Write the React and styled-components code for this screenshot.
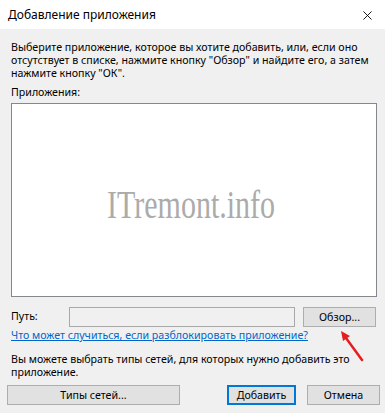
import React from 'react';
import styled, { createGlobalStyle } from 'styled-components';

// ----------------------------------------------------------------------

const GlobalStyle = createGlobalStyle`
    html, body {
        margin: 0;
        padding: 0;
        background: #f0f0f0;
    }
`;

const Dialog = styled.div`
    position: relative;
    width: 385px;
    height: 413px;
    background-color: #f0f0f0;
    font-family: "Noto Sans", "Open Sans", sans-serif;
    font-size: 10.65px;
    line-height: 13px;
    color: #000;
    display: flex;
    flex-direction: column;
    overflow: hidden;
`;

const TitleBar = styled.div`
    height: 29px;
    background-color: #fff;
    display: flex;
    align-items: center;
    justify-content: space-between;
    padding: 0 13px 0 8px;
    font-size: 12px;
`;

const CloseIcon = styled.svg`
    width: 9px;
    height: 9px;
    margin-top: 1px;
`;

const Content = styled.div`
    padding: 12px 8px 0 11px;
    display: flex;
    flex-direction: column;
`;

const Text = styled.p`
    margin: ${(p) => p.$mt || 0}px 0 0 0;
    white-space: nowrap;
`;

const AppList = styled.div`
    margin-top: 4px;
    width: 364px;
    height: 192px;
    background-color: #fff;
    border: 1px solid #828790;
    display: flex;
    align-items: center;
    justify-content: center;
`;

const Watermark = styled.span`
    font-family: "Liberation Serif", serif;
    font-size: 40px;
    line-height: 40px;
    color: #ababab;
    transform: scaleX(0.75);
    padding-top: 9px;
    margin-left: -5px;
    white-space: nowrap;
`;

const PathRow = styled.div`
    margin-top: 10px;
    display: grid;
    grid-template-columns: 50px 226px 73px;
    column-gap: 8px;
    align-items: center;
`;

const PathLabel = styled.span`
    padding-bottom: 2px;
`;

const PathInput = styled.div`
    height: 18px;
    border: 1px solid #a9a9a9;
    background-color: #f0f0f0;
`;

const Button = styled.button`
    box-sizing: border-box;
    width: ${(p) => p.$w}px;
    height: 20px;
    padding: 0;
    font-family: inherit;
    font-size: 10.65px;
    color: #000;
    background-color: #e1e1e1;
    border: ${(p) => (p.$primary ? '2px solid #0078d7' : '1px solid #adadad')};
`;

const Link = styled.a`
    margin-top: 2px;
    color: #0066cc;
    text-decoration: underline;
    white-space: nowrap;
`;

const Footer = styled.div`
    margin-top: 6px;
    padding: 0 5px 0 7px;
    display: flex;
    justify-content: space-between;
`;

const ButtonGroup = styled.div`
    display: flex;
    gap: 11px;
`;

const Arrow = styled.svg`
    position: absolute;
    left: 330px;
    top: 325px;
    width: 40px;
    height: 40px;
`;

function App() {
    return (
        <>
            <GlobalStyle />
            <Dialog>
                <TitleBar>
                    <span>Добавление приложения</span>
                    <CloseIcon viewBox="0 0 10 10">
                        <path d="M0.5 0.5 L9.5 9.5 M9.5 0.5 L0.5 9.5" stroke="#000" strokeWidth="1" fill="none" />
                    </CloseIcon>
                </TitleBar>

                <Content>
                    <Text>
                        Выберите приложение, которое вы хотите добавить, или, если оно<br />
                        отсутствует в списке, нажмите кнопку "Обзор" и найдите его, а затем<br />
                        нажмите кнопку "ОК".
                    </Text>
                    <Text $mt={6}>Приложения:</Text>

                    <AppList>
                        <Watermark>ITremont.info</Watermark>
                    </AppList>

                    <PathRow>
                        <PathLabel>Путь:</PathLabel>
                        <PathInput />
                        <Button $w={73} type="button">Обзор...</Button>
                    </PathRow>

                    <Link href="#">Что может случиться, если разблокировать приложение?</Link>

                    <Text $mt={11}>
                        Вы можете выбрать типы сетей, для которых нужно добавить это<br />
                        приложение.
                    </Text>
                </Content>

                <Footer>
                    <Button $w={173} type="button">Типы сетей...</Button>
                    <ButtonGroup>
                        <Button $w={69} $primary type="button">Добавить</Button>
                        <Button $w={73} type="button">Отмена</Button>
                    </ButtonGroup>
                </Footer>

                <Arrow viewBox="0 0 40 40">
                    <line x1="32" y1="35" x2="16" y2="13" stroke="#e41e1e" strokeWidth="2.5" strokeLinecap="round" />
                    <polygon points="11,6 20,11 13,16" fill="#e41e1e" />
                </Arrow>
            </Dialog>
        </>
    );
}

export default App;
